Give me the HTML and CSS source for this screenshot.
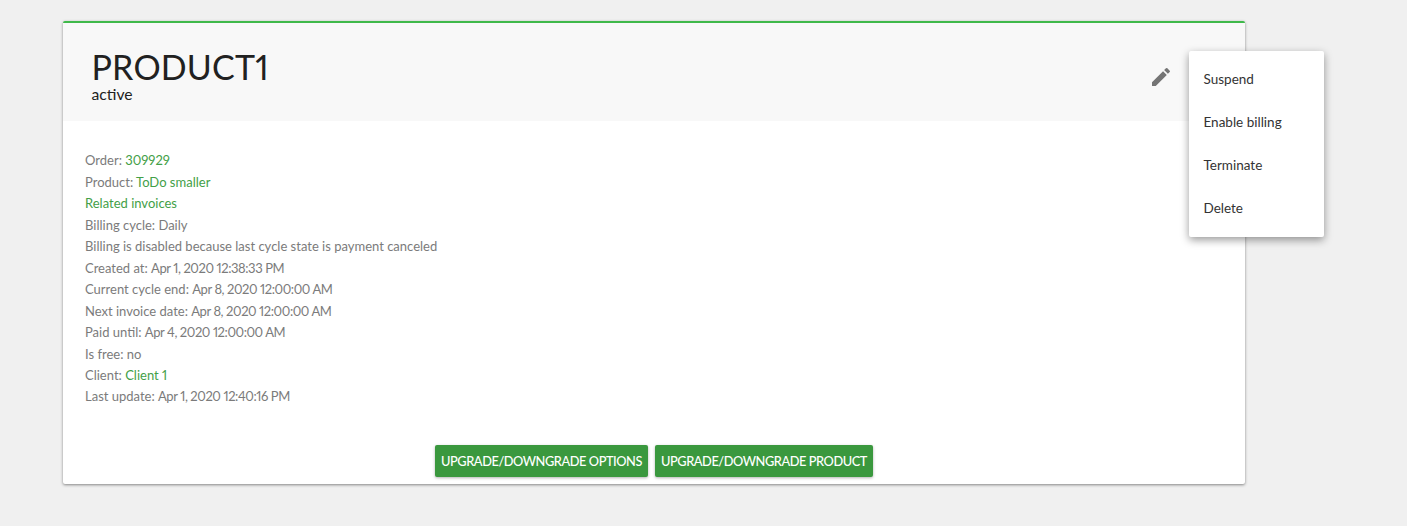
FILE: index.html
```html
<!DOCTYPE html>
<html lang="en">

<head>
    <meta charset="UTF-8">
    <meta name="viewport" content="width=device-width, initial-scale=1.0">
    <title>Product</title>
    <link rel="stylesheet" href="styles.css">
</head>

<body>
    <div class="card">
        <div class="card-header">
            <div>
                <h1 class="product-name">PRODUCT1</h1>
                <div class="product-status">active</div>
            </div>
            <svg class="edit-icon" viewBox="0 0 24 24" width="24" height="24">
                <path d="M3 17.25V21h3.75L17.81 9.94l-3.75-3.75L3 17.25zM20.71 7.04a1 1 0 0 0 0-1.41l-2.34-2.34a1 1 0 0 0-1.41 0l-1.83 1.83 3.75 3.75 1.83-1.83z"/>
            </svg>
        </div>
        <div class="card-body">
            <div>Order: <a href="#">309929</a></div>
            <div>Product: <a href="#">ToDo smaller</a></div>
            <div><a href="#">Related invoices</a></div>
            <div>Billing cycle: Daily</div>
            <div>Billing is disabled because last cycle state is payment canceled</div>
            <div>Created at: <span class="date">Apr 1, 2020 12:38:33 PM</span></div>
            <div>Current cycle end: <span class="date">Apr 8, 2020 12:00:00 AM</span></div>
            <div>Next invoice date: <span class="date">Apr 8, 2020 12:00:00 AM</span></div>
            <div>Paid until: <span class="date">Apr 4, 2020 12:00:00 AM</span></div>
            <div>Is free: no</div>
            <div>Client: <a href="#">Client 1</a></div>
            <div>Last update: <span class="date">Apr 1, 2020 12:40:16 PM</span></div>
        </div>
        <div class="card-actions">
            <button class="btn">UPGRADE/DOWNGRADE OPTIONS</button>
            <button class="btn">UPGRADE/DOWNGRADE PRODUCT</button>
        </div>
        <ul class="menu">
            <li>Suspend</li>
            <li>Enable billing</li>
            <li>Terminate</li>
            <li>Delete</li>
        </ul>
    </div>
</body>

</html>
```

FILE: styles.css
```css
body {
    background-color: #f0f0f0;
    font-family: Lato, "Open Sans", sans-serif;
    font-variant-numeric: proportional-nums;
    margin: 0;
    padding: 21px 162px 42px 63px;
}

a {
    color: #43a047;
    text-decoration: none;
}

.card {
    position: relative;
    background-color: #fff;
    border-top: 2px solid #3fb94a;
    box-shadow: 0 1px 3px rgba(0, 0, 0, 0.45);
    border-radius: 2px;
}

.card-header {
    background-color: #f8f8f8;
    height: 98px;
    padding: 0 72px 0 28.5px;
    display: flex;
    align-items: center;
    justify-content: space-between;
}

.product-name {
    font-size: 34px;
    font-weight: 400;
    letter-spacing: 0.2px;
    line-height: 40px;
    margin: 5px 0 0;
    color: #212121;
}

.product-status {
    font-size: 15.7px;
    line-height: 18px;
    margin-top: -2px;
    color: #212121;
}

.edit-icon {
    fill: #757575;
    margin-top: 9px;
}

.card-body {
    padding: 29.45px 22px 0;
    font-size: 13px;
    line-height: 21.45px;
    color: #7b7b7b;
}

.date {
    letter-spacing: -0.42px;
}

.card-actions {
    display: flex;
    justify-content: center;
    gap: 7px;
    padding: 37.55px 0 7px;
}

.btn {
    flex: none;
    height: 32px;
    padding: 0 6px 1px;
    border: none;
    border-radius: 2px;
    background-color: #3a983e;
    color: #fff;
    font-family: inherit;
    font-size: 12.8px;
    font-weight: 500;
    letter-spacing: -0.44px;
    white-space: nowrap;
    box-shadow: 0 1px 3px rgba(0, 0, 0, 0.3);
}

.menu {
    position: absolute;
    top: 28px;
    left: 1126px;
    width: 135px;
    margin: 0;
    padding: 7px 0;
    list-style: none;
    background-color: #fff;
    border-radius: 2px;
    box-shadow: 0 3px 8px rgba(0, 0, 0, 0.4);
    font-size: 13.5px;
    color: #333;
}

.menu li {
    height: 43px;
    line-height: 43px;
    padding-left: 14.5px;
}
```
